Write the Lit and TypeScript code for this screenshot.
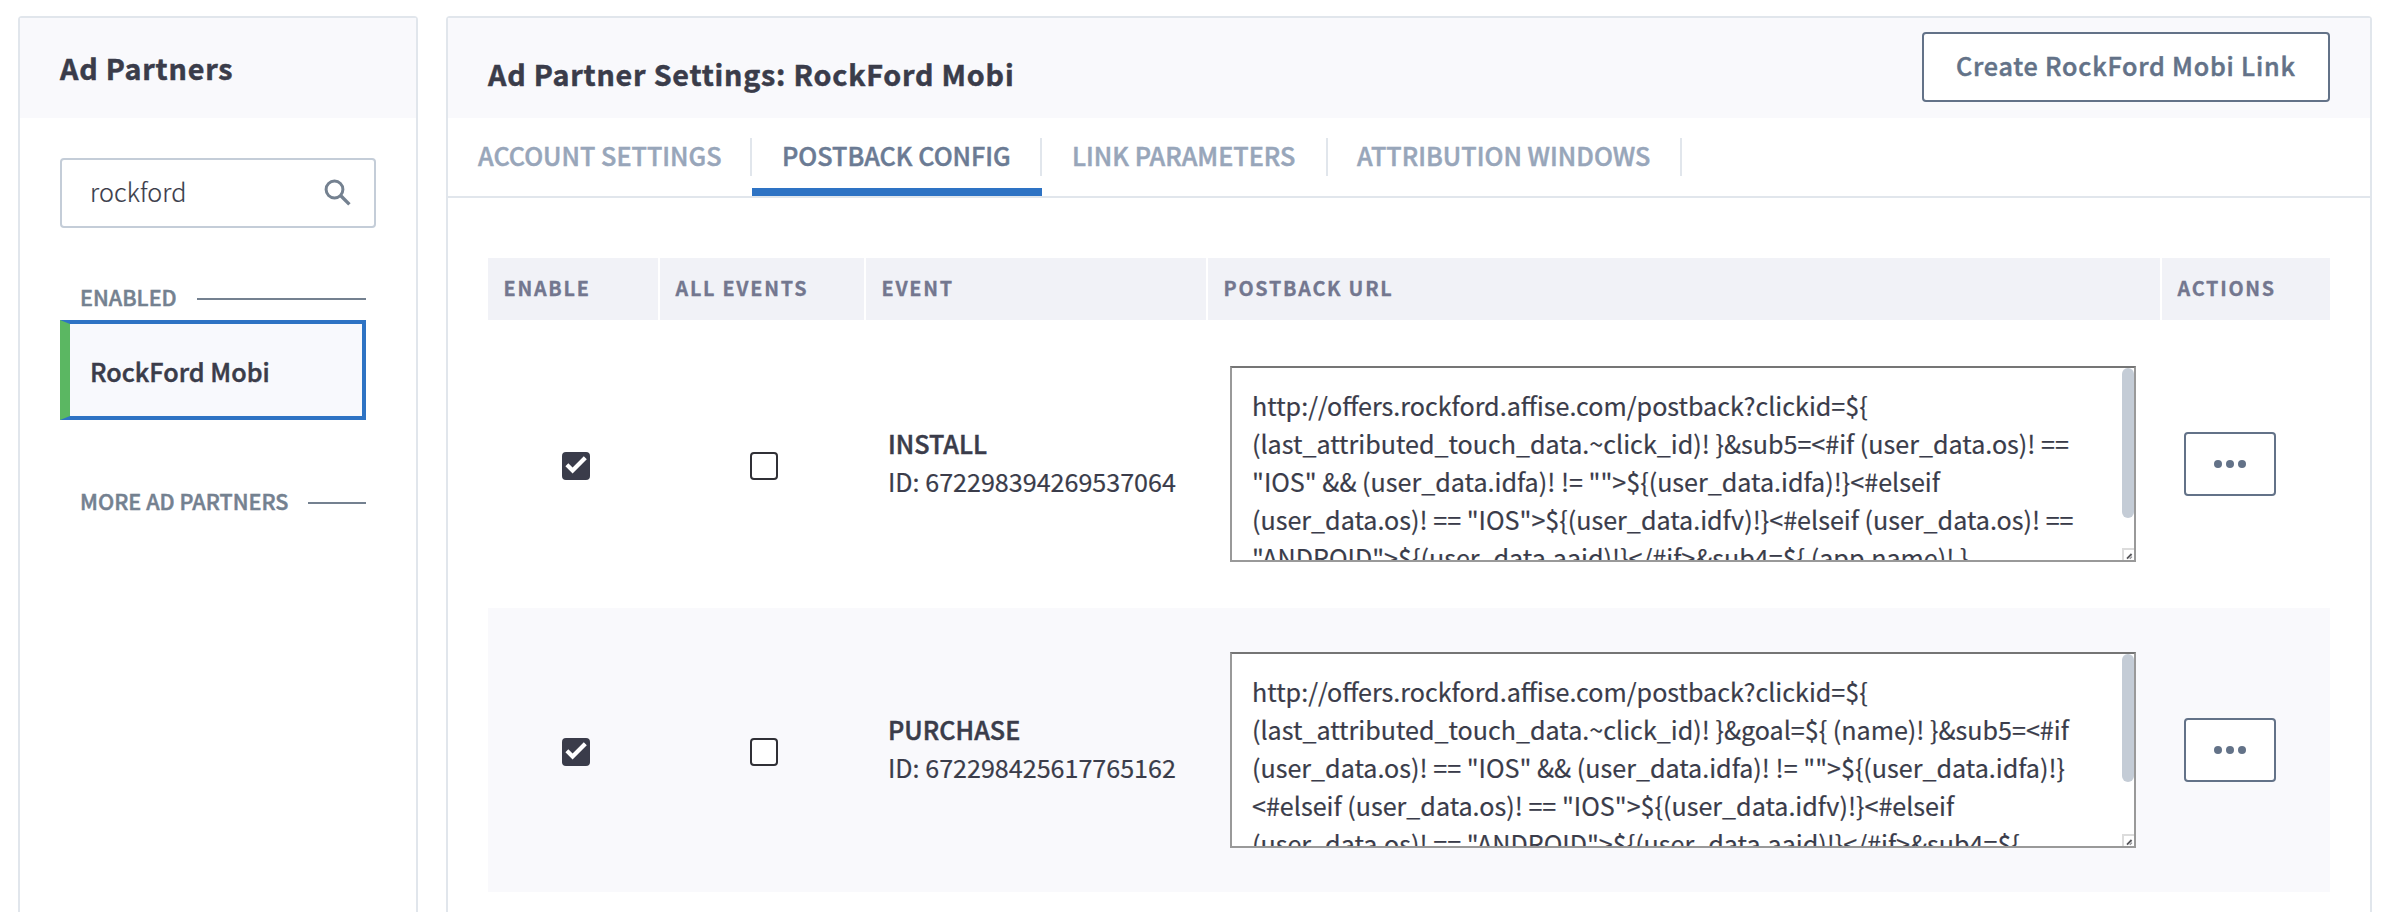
import { LitElement, html, css, nothing } from "lit";
import { customElement, property } from "lit/decorators.js";
import { classMap } from "lit/directives/class-map.js";

interface PostbackEvent {
  name: string;
  id: string;
  enabled: boolean;
  allEvents: boolean;
  thumb: number;
  url: string[];
}

const TABS = ["ACCOUNT SETTINGS", "POSTBACK CONFIG", "LINK PARAMETERS", "ATTRIBUTION WINDOWS"];
const COLUMNS = ["ENABLE", "ALL EVENTS", "EVENT", "POSTBACK URL", "ACTIONS"];

const EVENTS: PostbackEvent[] = [
  {
    name: "INSTALL",
    id: "672298394269537064",
    enabled: true,
    allEvents: false,
    thumb: 150,
    url: [
      "http://offers.rockford.affise.com/postback?clickid=${",
      "(last_attributed_touch_data.~click_id)! }&sub5=<#if (user_data.os)! ==",
      "\"IOS\" && (user_data.idfa)! != \"\">${(user_data.idfa)!}<#elseif",
      "(user_data.os)! == \"IOS\">${(user_data.idfv)!}<#elseif (user_data.os)! ==",
      "\"ANDROID\">${(user_data.aaid)!}</#if>&sub4=${ (app.name)! }",
    ],
  },
  {
    name: "PURCHASE",
    id: "672298425617765162",
    enabled: true,
    allEvents: false,
    thumb: 128,
    url: [
      "http://offers.rockford.affise.com/postback?clickid=${",
      "(last_attributed_touch_data.~click_id)! }&goal=${ (name)! }&sub5=<#if",
      "(user_data.os)! == \"IOS\" && (user_data.idfa)! != \"\">${(user_data.idfa)!}",
      "<#elseif (user_data.os)! == \"IOS\">${(user_data.idfv)!}<#elseif",
      "(user_data.os)! == \"ANDROID\">${(user_data.aaid)!}</#if>&sub4=${",
    ],
  },
];

@customElement("check-box")
class CheckBox extends LitElement {
  @property({ type: Boolean }) checked = false;

  static styles = css`
    :host { display: block; width: 28px; height: 28px; }
    .box {
      box-sizing: border-box; width: 28px; height: 28px;
      border: 2px solid #303036; border-radius: 4px; background: #fff;
    }
    .box.on { background: #3a3c4a; border-color: #3a3c4a; }
    svg { display: block; width: 24px; height: 24px; }
  `;

  render() {
    return html`<div class=${classMap({ box: true, on: this.checked })}>
      ${this.checked
        ? html`<svg viewBox="2 2 24 24"><path d="M3.4 14.2L6.3 11.3L10.6 15.4L21.8 4.2L24.8 7.2L10.6 21.6Z" fill="#fff"/></svg>`
        : nothing}
    </div>`;
  }
}

@customElement("url-field")
class UrlField extends LitElement {
  @property({ attribute: false }) lines: string[] = [];
  @property({ type: Number }) thumb = 150;

  static styles = css`
    :host { display: block; }
    .field {
      position: relative; box-sizing: border-box; width: 906px; height: 196px;
      padding: 18px 0 0 20px; overflow: hidden; background: #fff;
      border: 2px solid #999; border-top-color: #757575;
      font-size: 25.1px; line-height: 38px; color: #3a3c4a;
      -webkit-text-stroke: 0.2px #3a3c4a;
    }
    .line { white-space: pre; height: 38px; }
    .thumb { position: absolute; right: 0; top: 0; width: 12px; border-radius: 6px; background: #c4ccd6; }
    .grip { position: absolute; right: 0; bottom: 0; width: 12px; height: 12px; background: #fff; }
    .grip svg { display: block; }
  `;

  render() {
    return html`<div class="field">
      ${this.lines.map((l) => html`<div class="line">${l}</div>`)}
      <div class="thumb" style="height:${this.thumb}px"></div>
      <div class="grip"><svg width="12" height="12" viewBox="0 0 12 12">
        <path d="M1 12V1H12" fill="none" stroke="#dcdcdc" stroke-width="2"/>
        <path d="M5 10.6L9.6 6" fill="none" stroke="#55555a" stroke-width="1.8"/>
        <path d="M7.8 10.8L10 8.6" fill="none" stroke="#8a8a8f" stroke-width="1.2"/>
      </svg></div>
    </div>`;
  }
}

@customElement("partner-sidebar")
class PartnerSidebar extends LitElement {
  static styles = css`
    :host {
      display: flex; flex-direction: column; box-sizing: border-box; width: 400px; flex: none;
      border: 2px solid #e1e6ec; border-bottom: 0; border-radius: 4px 4px 0 0;
    }
    .head {
      height: 100px; box-sizing: border-box; padding: 25px 0 0 40px; background: #f9f9fc;
      font-weight: 700; font-size: 28.7px; line-height: 50px; letter-spacing: 0.8px; color: #3a3c4a;
      -webkit-text-stroke: 0.5px #3a3c4a;
    }
    .body { padding: 40px 50px 0 40px; }
    .search {
      box-sizing: border-box; width: 316px; height: 70px; border: 2px solid #c4cdd8; border-radius: 4px;
      display: flex; align-items: center; justify-content: space-between; padding: 0 22px 0 28px;
      font-weight: 300; font-size: 25.13px; line-height: 60px; letter-spacing: 0.15px; color: #3a3c4a;
      -webkit-text-stroke: 0.2px #3a3c4a;
    }
    .search span { padding-bottom: 4px; }
    .group {
      display: flex; align-items: center; gap: 20px; padding-left: 20px; height: 30px; width: 286px;
      font-weight: 500; font-size: 21.55px; line-height: 30px; letter-spacing: 0.02px; color: #748190;
      -webkit-text-stroke: 0.5px #748190;
    }
    .group::after { content: ""; flex: 1; height: 2px; background: #748190; margin-top: 4px; }
    .enabled { margin-top: 54px; }
    .more { margin-top: 66px; }
    .item {
      box-sizing: border-box; width: 306px; height: 100px; margin-top: 8px; padding-left: 20px;
      background: #f8f9fd; border: 4px solid #2e73c4; border-left: 10px solid #5bb762;
      font-weight: 500; font-size: 25.13px; line-height: 94px; letter-spacing: 0.05px; color: #3a3c4a;
      -webkit-text-stroke: 0.5px #3a3c4a;
    }
  `;

  render() {
    return html`
      <div class="head">Ad Partners</div>
      <div class="body">
        <div class="search">
          <span>rockford</span>
          <svg width="28" height="28" viewBox="0 0 28 28" fill="none" stroke="#748190">
            <circle cx="10.5" cy="10.5" r="8.4" stroke-width="3"/>
            <path d="M16.8 16.8L25.4 25.4" stroke-width="3.4"/>
          </svg>
        </div>
        <div class="group enabled">ENABLED</div>
        <div class="item">RockFord Mobi</div>
        <div class="group more">MORE AD PARTNERS</div>
      </div>
    `;
  }
}

@customElement("partner-settings")
class PartnerSettings extends LitElement {
  static styles = css`
    :host {
      display: flex; flex-direction: column; box-sizing: border-box; width: 1926px; flex: none;
      border: 2px solid #e1e6ec; border-bottom: 0; border-radius: 4px 4px 0 0;
    }
    .head {
      height: 100px; box-sizing: border-box; padding: 14px 40px 16px; background: #f9f9fc;
      display: flex; justify-content: space-between;
    }
    .title {
      padding-top: 17px; font-weight: 700; font-size: 28.7px; line-height: 50px;
      letter-spacing: 0.79px; color: #3a3c4a; -webkit-text-stroke: 0.5px #3a3c4a;
    }
    .create {
      box-sizing: border-box; width: 408px; height: 70px; border: 2px solid #637288; border-radius: 4px;
      background: #fff; padding-left: 32px; color: #637288; white-space: nowrap;
      font-weight: 500; font-size: 25.13px; line-height: 62px; letter-spacing: 0.8px;
      -webkit-text-stroke: 0.5px #637288;
    }
    .tabs { height: 80px; box-sizing: border-box; border-bottom: 2px solid #e1e6ec; display: flex; }
    .tab {
      box-sizing: border-box; height: 78px; display: flex; align-items: flex-start;
      padding-top: 20px; border-bottom: 8px solid transparent; color: #98a6ba;
      font-weight: 500; font-size: 25.13px; line-height: 35px; letter-spacing: 0.03px;
      -webkit-text-stroke: 0.5px currentColor;
    }
    .tab span {
      box-sizing: border-box; height: 38px; width: 100%; padding-left: 30px;
      border-right: 2px solid #e1e6ec; white-space: nowrap;
    }
    .tab.active { color: #6b7b94; border-bottom-color: #2e73c4; }
    .t0 { width: 304px; }
    .t1 { width: 290px; }
    .t2 { width: 286px; }
    .t3 { width: 354px; }
    .t3 span { padding-left: 29px; }
    .table { padding: 60px 40px 0; }
    .row { display: grid; grid-template-columns: 170px 204px 340px 952px 168px; column-gap: 2px; }
    .th {
      height: 62px; box-sizing: border-box; padding-left: 15.5px; background: #f1f2f7;
      font-weight: 700; font-size: 19.75px; line-height: 59px; letter-spacing: 1.74px; color: #73778f;
      -webkit-text-stroke: 0.3px #73778f;
    }
    .header { margin-bottom: 2px; }
    .record { height: 284px; margin-bottom: 2px; align-items: center; }
    .record.alt { background: #f9f9fc; }
    .c0 { padding: 4px 0 0 74px; }
    .c1 { padding: 4px 0 0 90px; }
    .c2 {
      padding: 0 0 4px 22px; font-size: 25.1px; line-height: 38px; color: #3a3c4a;
      -webkit-text-stroke: 0.2px #3a3c4a;
    }
    .name { font-weight: 500; letter-spacing: 0.05px; -webkit-text-stroke: 0.5px #3a3c4a; }
    .c3, .c4 { padding-left: 22px; }
    .more {
      box-sizing: border-box; width: 92px; height: 64px; border: 2px solid #637288; border-radius: 4px;
      background: #fff; display: flex; align-items: center; justify-content: center; gap: 4px;
    }
    .more i { width: 8px; height: 8px; border-radius: 50%; background: #637288; }
  `;

  render() {
    return html`
      <div class="head">
        <div class="title">Ad Partner Settings: RockFord Mobi</div>
        <div class="create">Create RockFord Mobi Link</div>
      </div>
      <div class="tabs">
        ${TABS.map((t, i) => html`<div class="tab t${i} ${i === 1 ? "active" : ""}"><span>${t}</span></div>`)}
      </div>
      <div class="table">
        <div class="row header">${COLUMNS.map((c) => html`<div class="th">${c}</div>`)}</div>
        ${EVENTS.map((e, i) => html`
          <div class="row record ${i % 2 ? "alt" : ""}">
            <div class="c0"><check-box ?checked=${e.enabled}></check-box></div>
            <div class="c1"><check-box ?checked=${e.allEvents}></check-box></div>
            <div class="c2"><div class="name">${e.name}</div><div>ID: ${e.id}</div></div>
            <div class="c3"><url-field .lines=${e.url} .thumb=${e.thumb}></url-field></div>
            <div class="c4"><div class="more"><i></i><i></i><i></i></div></div>
          </div>`)}
      </div>
    `;
  }
}

@customElement("app-root")
class AppRoot extends LitElement {
  static styles = css`
    :host {
      display: flex; gap: 28px; box-sizing: border-box; height: 912px; overflow: hidden;
      padding: 16px 0 0 18px; background: #fff;
      font-family: "Noto Sans CJK JP", "Noto Sans CJK SC", "Noto Sans", sans-serif;
    }
  `;

  render() {
    return html`<partner-sidebar></partner-sidebar><partner-settings></partner-settings>`;
  }
}
